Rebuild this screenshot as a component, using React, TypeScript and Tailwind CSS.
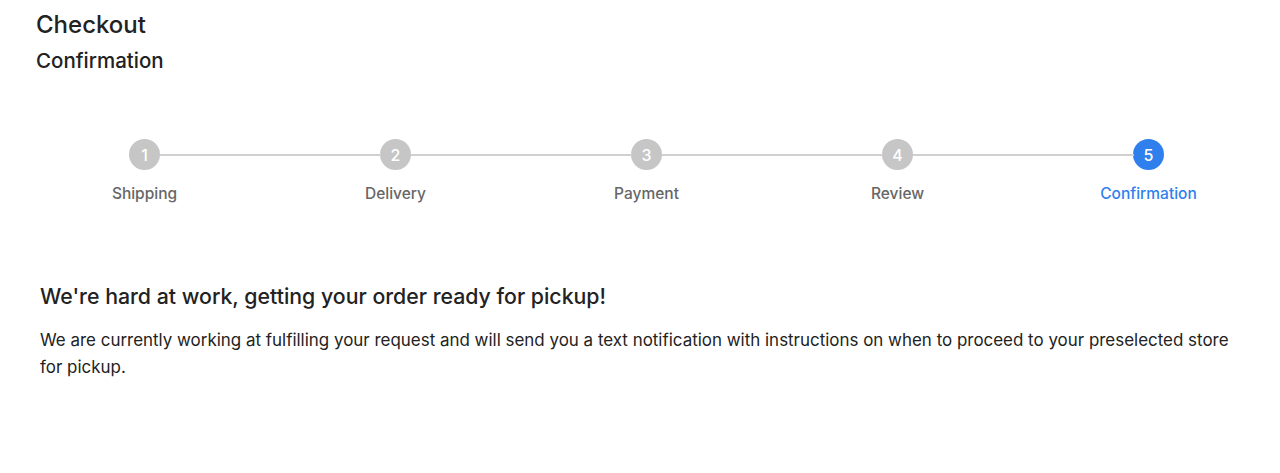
const steps = ['Shipping', 'Delivery', 'Payment', 'Review', 'Confirmation']

export default function App() {
  const active = 4

  return (
    <div className="min-h-screen bg-white text-[#222] font-['Inter','Liberation_Sans',Arial,sans-serif]">
      <div className="px-9 pt-[11px]">
        <h1 className="text-[24px] leading-[28px] font-medium">Checkout</h1>
        <h2 className="mt-[10px] text-[20.5px] leading-[24px] font-medium">Confirmation</h2>
      </div>

      <div className="mt-[66px] pl-[19px] pr-[6px] flex">
        {steps.map((label, i) => (
          <div key={label} className="relative flex-1 flex flex-col items-center">
            {i > 0 && (
              <div className="absolute top-[15px] h-[2px] bg-[#d0d0d0] left-[calc(-50%+15px)] right-[calc(50%+15px)]" />
            )}
            <div
              className={
                i === active
                  ? 'w-[31px] h-[31px] rounded-full bg-[#2f80ed] text-white flex items-center justify-center text-[16px] font-medium'
                  : 'w-[31px] h-[31px] rounded-full bg-[#c6c6c6] text-white flex items-center justify-center text-[16px] font-medium'
              }
            >
              {i + 1}
            </div>
            <div
              className={
                i === active
                  ? 'mt-[15px] text-[15.5px] leading-[18px] font-medium text-[#2f80ed]'
                  : 'mt-[15px] text-[15.5px] leading-[18px] font-medium text-[#666]'
              }
            >
              {label}
            </div>
          </div>
        ))}
      </div>

      <div className="mt-[81px] pl-10 pr-[40px]">
        <h3 className="text-[21.3px] leading-[24px] font-medium">
          We're hard at work, getting your order ready for pickup!
        </h3>
        <p className="mt-[19px] text-[16.95px] leading-[27px] text-[#222]">
          We are currently working at fulfilling your request and will send you a text notification with instructions on when to proceed to your preselected store for pickup.
        </p>
      </div>
    </div>
  )
}
